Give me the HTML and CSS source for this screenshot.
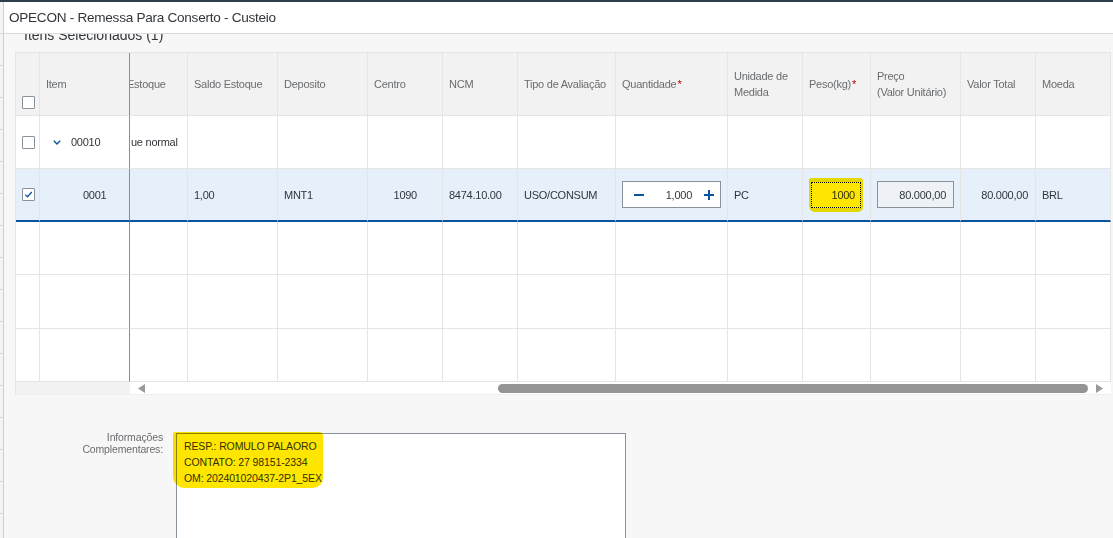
FILE: index.html
```html
<!DOCTYPE html>
<html lang="pt">
<head>
<meta charset="utf-8">
<title>OPECON - Remessa Para Conserto - Custeio</title>
<link rel="stylesheet" href="styles.css">
</head>
<body>
<div class="topbar"></div>
<div class="page">
  <div class="strip"></div>
  <div class="dialog">
    <header class="dlg-header"><h1 class="dlg-title">OPECON - Remessa Para Conserto - Custeio</h1></header>
    <div class="content">
      <div class="section-title">Itens Selecionados (1)</div>
      <div class="grid">
        <!-- header -->
        <div class="c h c1 hcb"><span class="cb"></span></div>
        <div class="c h fx">Item</div>
        <div class="c h clip"><span class="shift">Estoque</span></div>
        <div class="c h">Saldo Estoque</div>
        <div class="c h">Deposito</div>
        <div class="c h">Centro</div>
        <div class="c h">NCM</div>
        <div class="c h">Tipo de Avaliação</div>
        <div class="c h">Quantidade<span class="req">*</span></div>
        <div class="c h"><span>Unidade de<br>Medida</span></div>
        <div class="c h">Peso(kg)<span class="req">*</span></div>
        <div class="c h"><span>Preço<br>(Valor Unitário)</span></div>
        <div class="c h">Valor Total</div>
        <div class="c h">Moeda</div>

        <!-- group row -->
        <div class="c c1"><span class="cb"></span></div>
        <div class="c fx grp"><svg class="chev" width="8" height="5" viewBox="0 0 8 5"><polyline points="0.8,0.8 4,4 7.2,0.8" fill="none" stroke="#0854a0" stroke-width="1.4"/></svg><span>00010</span></div>
        <div class="c clip"><span class="shift2">ue normal</span></div>
        <div class="c"></div>
        <div class="c"></div>
        <div class="c"></div>
        <div class="c"></div>
        <div class="c"></div>
        <div class="c"></div>
        <div class="c"></div>
        <div class="c"></div>
        <div class="c"></div>
        <div class="c"></div>
        <div class="c"></div>

        <!-- selected row -->
        <div class="c s c1"><span class="cb checked"><svg width="11" height="11" viewBox="0 0 11 11"><polyline points="2.2,5.6 4.5,7.8 8.8,3" fill="none" stroke="#0854a0" stroke-width="1.3"/></svg></span></div>
        <div class="c s fx sub">0001</div>
        <div class="c s"></div>
        <div class="c s">1,00</div>
        <div class="c s">MNT1</div>
        <div class="c s num centro">1090</div>
        <div class="c s">8474.10.00</div>
        <div class="c s">USO/CONSUM</div>
        <div class="c s qty">
          <div class="step">
            <svg class="step-ic" width="10" height="10" viewBox="0 0 10 10"><rect x="0" y="4" width="10" height="2" fill="#0854a0"/></svg>
            <span class="step-val">1,000</span>
            <svg class="step-ic" width="10" height="10" viewBox="0 0 10 10"><rect x="0" y="4" width="10" height="2" fill="#0854a0"/><rect x="4" y="0" width="2" height="10" fill="#0854a0"/></svg>
          </div>
        </div>
        <div class="c s">PC</div>
        <div class="c s peso">
          <div class="peso-wrap">
            <div class="peso-input">1000</div>
            <div class="hl hl-peso"></div>
          </div>
        </div>
        <div class="c s preco"><div class="ro-input">80.000,00</div></div>
        <div class="c s num">80.000,00</div>
        <div class="c s">BRL</div>

        <!-- empty rows -->
        <div class="c c1"></div><div class="c fx"></div><div class="c"></div><div class="c"></div><div class="c"></div><div class="c"></div><div class="c"></div><div class="c"></div><div class="c"></div><div class="c"></div><div class="c"></div><div class="c"></div><div class="c"></div><div class="c"></div>
        <div class="c c1"></div><div class="c fx"></div><div class="c"></div><div class="c"></div><div class="c"></div><div class="c"></div><div class="c"></div><div class="c"></div><div class="c"></div><div class="c"></div><div class="c"></div><div class="c"></div><div class="c"></div><div class="c"></div>
        <div class="c c1"></div><div class="c fx"></div><div class="c"></div><div class="c"></div><div class="c"></div><div class="c"></div><div class="c"></div><div class="c"></div><div class="c"></div><div class="c"></div><div class="c"></div><div class="c"></div><div class="c"></div><div class="c"></div>

        <!-- horizontal scrollbar -->
        <div class="scrollrow">
          <div class="scroll-fixed"></div>
          <div class="scroll-track">
            <svg class="arr arr-l" width="7" height="9" viewBox="0 0 7 9"><polygon points="7,0 7,9 0,4.5" fill="#999"/></svg>
            <div class="thumb"></div>
            <svg class="arr arr-r" width="7" height="9" viewBox="0 0 7 9"><polygon points="0,0 0,9 7,4.5" fill="#999"/></svg>
          </div>
        </div>
      </div>

      <div class="info-row">
        <div class="info-label">Informações<br>Complementares:</div>
        <div class="textarea">
          <div class="ta-text">RESP.: ROMULO PALAORO<br>CONTATO: 27 98151-2334<br>OM: 202401020437-2P1_5EX</div>
          <div class="hl hl-text"></div>
        </div>
      </div>
    </div>
  </div>
</div>
</body>
</html>
```

FILE: styles.css
```css
* { box-sizing: border-box; }

body {
  margin: 0;
  height: 538px;
  overflow: hidden;
  font-family: "Liberation Sans", Arial, sans-serif;
  background: #f4f4f4;
}

.topbar {
  height: 2px;
  background: #2f3e4e;
}

.page {
  display: flex;
  height: 536px;
}

.strip {
  width: 3px;
  background: repeating-linear-gradient(to bottom, #f4f4f4 0 31px, #dadada 31px 32px);
}

.dialog {
  flex: 1;
  min-width: 0;
  display: flex;
  flex-direction: column;
  border-left: 1px solid #cfcfcf;
  background: #f7f7f7;
  overflow: hidden;
}

.dlg-header {
  height: 32px;
  flex: none;
  display: flex;
  align-items: center;
  padding-left: 5px;
  background: #fff;
  border-bottom: 1px solid #d9d9d9;
}

.dlg-title {
  margin: 0;
  font-size: 13.6px;
  font-weight: normal;
  color: #32363a;
  letter-spacing: -0.28px;
}

.content {
  flex: 1;
  overflow: hidden;
  padding-left: 11px;
}

.section-title {
  margin-top: -8px;
  height: 18px;
  line-height: 18px;
  padding-left: 9px;
  font-size: 14px;
  color: #32363a;
}

.grid {
  margin-top: 8px;
  display: grid;
  width: max-content;
  grid-template-columns: 24px 90px 58px 90px 90px 75px 75px 98px 112px 75px 68px 90px 75px 75px;
  grid-template-rows: 63px 53px 53px 53px 54px 53px 13px;
  border-left: 1px solid #e5e5e5;
  border-top: 1px solid #e5e5e5;
  background: #fff;
}

.c {
  display: flex;
  align-items: center;
  padding: 0 6px;
  border-right: 1px solid #e5e5e5;
  border-bottom: 1px solid #e5e5e5;
  font-size: 11px;
  letter-spacing: -0.25px;
  color: #32363a;
  white-space: nowrap;
  overflow: hidden;
}

.h {
  background: #f2f2f2;
  color: #6a6d70;
  line-height: 16px;
}

.c1 { padding: 0 0 0 6px; }
.hcb { align-items: flex-end; padding-bottom: 6px; }

.fx { border-right-color: #8c8c8c; }

.clip { padding-left: 0; }
.shift { margin-left: -3px; }
.shift2 { margin-left: 1px; }

.req {
  color: #bb0000;
  margin-left: 1px;
}

.s {
  background: #e5f0fa;
  border-bottom: 2px solid #0854a0;
}

.cb {
  display: inline-flex;
  align-items: center;
  justify-content: center;
  width: 13px;
  height: 13px;
  border: 1px solid #89919a;
  border-radius: 1px;
  background: #fff;
}

.grp { padding-left: 13px; }
.chev { margin-right: 10px; flex: none; }

.sub { padding-left: 43px; }

.num { justify-content: flex-end; padding-right: 7px; }
.centro { padding-right: 25px; }

.qty { padding-left: 6px; }

.step {
  display: flex;
  align-items: center;
  width: 99px;
  height: 27px;
  padding: 0 6px 0 11px;
  border: 1px solid #89919a;
  background: #fff;
}

.step-ic { flex: none; }

.step-val {
  flex: 1;
  text-align: right;
  margin-right: 12px;
  color: #32363a;
}

.peso { padding-left: 8px; }

.peso-wrap { position: relative; }

.peso-input {
  width: 50px;
  height: 26px;
  padding-right: 5px;
  border: 1px dotted #000;
  background: #fff;
  display: flex;
  align-items: center;
  justify-content: flex-end;
  color: #32363a;
}

.hl {
  position: absolute;
  background: #ffe600;
  mix-blend-mode: multiply;
  pointer-events: none;
}

.hl-peso {
  left: -2px;
  right: -2px;
  top: -4px;
  bottom: -4px;
  border-radius: 2px 3px 5px 6px;
}

.preco { padding-left: 6px; }

.ro-input {
  width: 77px;
  height: 27px;
  padding-right: 7px;
  border: 1px solid #89919a;
  background: #eef2f6;
  display: flex;
  align-items: center;
  justify-content: flex-end;
  color: #32363a;
}

.scrollrow {
  grid-column: 1 / -1;
  display: flex;
  border-bottom: 1px solid #f0f0f0;
}

.scroll-fixed {
  width: 114px;
  background: #f2f2f2;
}

.scroll-track {
  flex: 1;
  display: flex;
  align-items: center;
  background: #fff;
}

.arr-l { margin-left: 8px; }

.thumb {
  margin-left: 353px;
  width: 590px;
  height: 9px;
  border-radius: 5px;
  background: #949494;
}

.arr-r { margin-left: 8px; }

.info-row {
  display: flex;
  margin-top: 38px;
}

.info-label {
  width: 148px;
  margin-top: -2px;
  text-align: right;
  font-size: 10.5px;
  letter-spacing: -0.15px;
  line-height: 12px;
  color: #6a6d70;
}

.textarea {
  position: relative;
  margin-left: 13px;
  width: 450px;
  height: 200px;
  border: 1px solid #89919a;
  background: #fff;
  padding: 4px 7px;
}

.ta-text {
  font-size: 10.5px;
  letter-spacing: -0.12px;
  line-height: 16px;
  color: #32363a;
}

.hl-text {
  left: -4px;
  top: -2px;
  width: 150px;
  height: 56px;
  border-radius: 2px 4px 10px 12px;
}
```
